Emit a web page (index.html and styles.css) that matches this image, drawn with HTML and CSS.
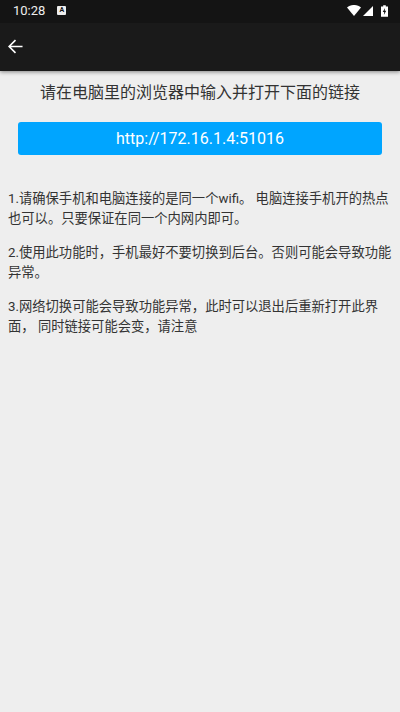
FILE: index.html
```html
<!DOCTYPE html>
<html lang="zh-CN">
<head>
    <meta charset="UTF-8">
    <meta name="viewport" content="width=device-width, initial-scale=1.0">
    <title>链接</title>
    <link rel="stylesheet" href="styles.css">
</head>
<body>
    <div class="header">
        <div class="statusbar">
            <span class="time">10:28</span>
            <span class="badge">A</span>
            <span class="status-icons">
                <svg width="14" height="11" viewBox="0 0 15 11" preserveAspectRatio="none"><path d="M0 2.6C4-.9 11-.9 15 2.6L7.5 11z" fill="#fff"/></svg>
                <svg class="signal" width="10" height="10" viewBox="0 0 11 11"><path d="M11 0V11H0z" fill="#fff"/></svg>
                <svg width="7" height="12" viewBox="0 0 8 13"><path d="M2.5 0h3v1.3H8V13H0V1.3h2.5z" fill="#fff"/><path d="M4.6 3 2 7.6h1.7L3.3 11 6 6.3H4.3z" fill="#111"/></svg>
            </span>
        </div>
        <div class="toolbar">
            <svg width="15" height="15" viewBox="0 0 16 16"><path d="M15.5 8H1.5M8 1.2 1.2 8 8 14.8" fill="none" stroke="#fff" stroke-width="1.7"/></svg>
        </div>
    </div>

    <div class="content">
        <div class="title">请在电脑里的浏览器中输入并打开下面的链接</div>
        <div class="link">http://172.16.1.4:51016</div>
        <div class="notes">
            <p>1.请确保手机和电脑连接的是同一个wifi。 电脑连接手机开的热点也可以。只要保证在同一个内网内即可。</p>
            <p>2.使用此功能时，手机最好不要切换到后台。否则可能会导致功能异常。</p>
            <p>3.网络切换可能会导致功能异常，此时可以退出后重新打开此界面， 同时链接可能会变，请注意</p>
        </div>
    </div>
</body>
</html>
```

FILE: styles.css
```css
*{
    margin: 0;
    padding: 0;
    box-sizing: border-box;
}
html,body{
    height: 100%;
}
body{
    background-color: #eeeeee;
    overflow: hidden;
    font-family: Roboto, "Noto Sans CJK SC", sans-serif;
    color: #333333;
}
.header{
    height: 71px;
    background-color: #1a1a1a;
    box-shadow: 0 1px 4px rgba(0,0,0,0.45);
}
.statusbar{
    height: 23px;
    padding: 0 12px 2px 13px;
    display: flex;
    align-items: center;
    background-color: #141414;
    color: #ffffff;
}
.time{
    font-size: 13px;
    color: #eeeeee;
}
.badge{
    width: 9px;
    height: 9px;
    margin-left: 12px;
    border-radius: 1px;
    background-color: #eeeeee;
    color: #111111;
    font-size: 7px;
    font-weight: bold;
    line-height: 9px;
    text-align: center;
}
.status-icons{
    margin-left: auto;
    display: flex;
    align-items: center;
    gap: 2px;
}
.signal{
    margin-right: 6px;
}
.toolbar{
    height: 46px;
    padding-left: 8px;
    display: flex;
    align-items: center;
}
.content{
    padding: 0 8px;
}
.title{
    margin-top: 11px;
    font-size: 16px;
    line-height: 22px;
    text-align: center;
}
.link{
    height: 33px;
    margin: 18px 10px 0;
    border-radius: 3px;
    background-color: #00a5ff;
    color: #ffffff;
    font-size: 16px;
    line-height: 33px;
    text-align: center;
}
.notes{
    margin-top: 34px;
    margin-right: -1px;
    font-size: 13.3px;
    line-height: 20px;
}
.notes p{
    margin-bottom: 14px;
}
```
